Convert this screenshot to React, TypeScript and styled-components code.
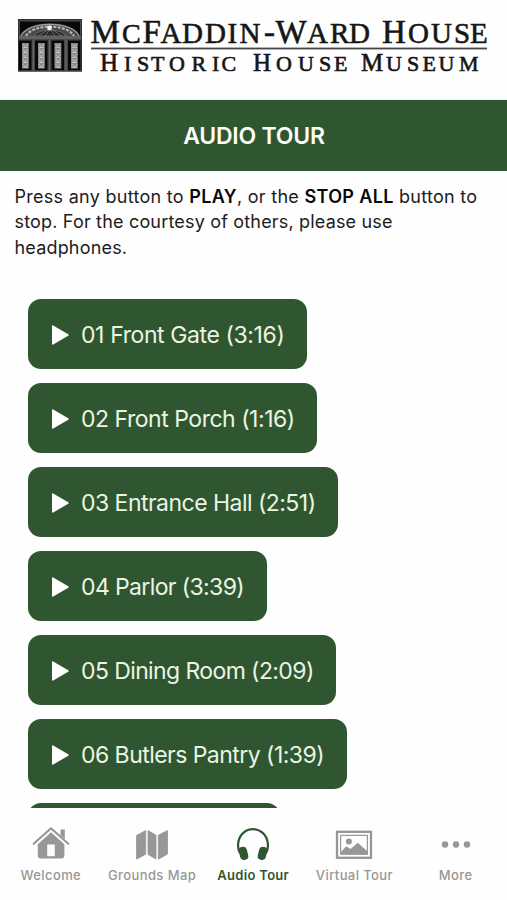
import React from "react";
import styled, { createGlobalStyle } from "styled-components";

const GREEN = "#305631";
const GREY = "#979797";

const GlobalStyle = createGlobalStyle`
  * { box-sizing: border-box; }
  body { margin: 0; background: #fefefe; font-family: Inter, "Liberation Sans", sans-serif; }
`;

const Screen = styled.div`
  width: 507px;
  height: 900px;
  display: flex;
  flex-direction: column;
  overflow: hidden;
  background: #fefefe;
`;

const Header = styled.header`
  height: 100px;
  flex: none;
  border-bottom: 1px solid #eef0e6;
`;

const Logo = styled.svg`
  display: block;
  font-family: "Liberation Serif", serif;
  fill: #161616;
`;

const Title = styled.h1`
  height: 70.5px;
  flex: none;
  margin: 0;
  display: flex;
  align-items: center;
  justify-content: center;
  padding: 1px 0 0 1px;
  background: ${GREEN};
  color: #fbfdf8;
  font-size: 23px;
  font-weight: 600;
  letter-spacing: -0.2px;
`;

const Content = styled.main`
  flex: none;
  height: 637.5px;
  overflow: hidden;
`;

const Intro = styled.p`
  margin: 0;
  height: 128.5px;
  padding: 13px 10px 0 14.5px;
  color: #1c1c1c;
  font-size: 18px;
  line-height: 25.6px;
  letter-spacing: 0.18px;
  white-space: nowrap;
`;

const Strong = styled.b`
  font-weight: 600;
  color: #080808;
  letter-spacing: 0.35px;
`;

const IntroLead = styled.span`
  letter-spacing: 0.28px;
`;

const TrackList = styled.div`
  display: flex;
  flex-direction: column;
  align-items: flex-start;
  gap: 14px;
  padding-left: 28px;
`;

const TrackButton = styled.button<{ $width: number; $spacing: number }>`
  width: ${(p) => p.$width}px;
  height: 70px;
  flex: none;
  display: flex;
  align-items: center;
  gap: 12px;
  padding: 1px 0 0 24px;
  border: 0;
  border-radius: 13px;
  background: ${GREEN};
  color: #eaf5e4;
  font: 400 23px Inter, sans-serif;
  letter-spacing: ${(p) => p.$spacing}px;
  white-space: nowrap;
`;

const PlayIcon = styled.svg`
  width: 17px;
  height: 20px;
  flex: none;
  fill: #fff;
`;

const TabBar = styled.nav`
  height: 92px;
  flex: none;
  display: grid;
  grid-template-columns: repeat(5, 101.2px);
`;

const Tab = styled.a<{ $active?: boolean }>`
  display: flex;
  flex-direction: column;
  align-items: center;
  padding: 16px 0 0 0.5px;
  gap: 3px;
  color: ${(p) => (p.$active ? GREEN : GREY)};
  font-size: 13px;
  font-weight: ${(p) => (p.$active ? 600 : 500)};
  line-height: 16px;
  letter-spacing: ${(p) => (p.$active ? 0.3 : 0.4)}px;
  white-space: nowrap;
`;

const TabIcon = styled.svg`
  width: 40px;
  height: 40px;
  flex: none;
  fill: currentColor;
`;

const tracks = [
  { label: "01 Front Gate (3:16)", width: 279, spacing: -0.4 },
  { label: "02 Front Porch (1:16)", width: 289, spacing: -0.48 },
  { label: "03 Entrance Hall (2:51)", width: 310, spacing: -0.53 },
  { label: "04 Parlor (3:39)", width: 238.5, spacing: -0.62 },
  { label: "05 Dining Room (2:09)", width: 308, spacing: -0.6 },
  { label: "06 Butlers Pantry (1:39)", width: 319, spacing: -0.54 },
  { label: "07 Kitchen (2:20)", width: 252, spacing: -0.5 },
];

const MuseumLogo = () => (
  <Logo width="507" height="99" viewBox="0 0 507 99">
    <rect x="18" y="19" width="64" height="52.5" fill="#484848" />
    <rect x="20" y="21.5" width="60" height="14" fill="#080808" />
    <path d="M20 36 C27 19 73 19 80 36Z" fill="#4a4a4a" />
    <path d="M21 36 C28 20.5 72 20.5 79 36" fill="none" stroke="#a2a2a2" strokeWidth="1.2" />
    <path d="M26 36 C33 23.5 67 23.5 74 36" fill="none" stroke="#b5b5b5" strokeWidth="2.2" strokeDasharray="3 1.3" />
    <path d="M34 36 C39 28 61 28 66 36Z" fill="#292929" stroke="#777" strokeWidth=".8" />
    <path d="M49 29 L38 36 M50 29 L45 36 M50 29 L55 36 M51 29 L62 36" stroke="#858585" strokeWidth=".7" />
    <circle cx="49.5" cy="28" r="2.4" fill="#f4f4f4" />
    <rect x="18" y="36" width="64" height="3" fill="#626262" />
    <rect x="18.5" y="19.5" width="63" height="51.5" fill="none" stroke="#303030" />
    {[19, 35, 51.5, 68].map((x) => (
      <g key={x}>
        <rect x={x} y="40.5" width="12.5" height="29.5" fill="#070707" />
        <rect x={x + 3} y="43" width="6.8" height="25.5" fill="#8b8b8b" />
        {[44, 49, 54, 59, 64].map((y) => (
          <path
            key={y}
            d={`M${x + 4} ${y} l2.4 3 2.4 -3 M${x + 4} ${y + 3.5} h5`}
            fill="none"
            stroke={y % 2 ? "#c8c8c8" : "#bdbdbd"}
            strokeWidth=".9"
          />
        ))}
      </g>
    ))}
    {[33.2, 49.5, 66].map((x) => (
      <path key={x} d={`M${x} 39.5V71`} stroke="#696969" strokeWidth="1" />
    ))}
    <g stroke="#161616" strokeWidth=".6">
      <text y="43" fontSize="33">
        <tspan x="90.5">M</tspan>
        <tspan x="122" fontSize="28">C</tspan>
        <tspan x="142.5">F</tspan>
        <tspan x="160.5 182 205 227.5 239.5" fontSize="29">ADDIN</tspan>
        <tspan x="264">-</tspan>
        <tspan x="275.5">W</tspan>
        <tspan x="307 330 349" fontSize="29">ARD</tspan>
        <tspan x="382">H</tspan>
        <tspan x="408 431 454 470" fontSize="29">OUSE</tspan>
      </text>
      <text y="71" fontSize="25">
        <tspan x="100">H</tspan>
        <tspan x="124 137 151 169 191.5 212 221.5" fontSize="22">ISTORIC</tspan>
        <tspan x="253">H</tspan>
        <tspan x="276 298 319 334" fontSize="22">OUSE</tspan>
        <tspan x="361">M</tspan>
        <tspan x="386 407 422.5 438.5 459" fontSize="22">USEUM</tspan>
      </text>
    </g>
    <rect x="91" y="47.6" width="396" height="1.8" fill="#444" />
  </Logo>
);

const HomeIcon = () => (
  <TabIcon viewBox="0 0 40 40">
    <path d="M2.7 19.8 L20 4.3 L37.3 19.8" fill="none" stroke="currentColor" strokeWidth="2.2" strokeLinecap="round" strokeLinejoin="round" />
    <path d="M29.5 5.6h4.3v9.5l-4.3-3.8z" />
    <path fillRule="evenodd" d="M20 8.2 33.4 20.2V31.5a3 3 0 0 1-3 3H9.8a3 3 0 0 1-3-3V20.2ZM16.2 20.5V32.3H23.8V20.5Z" />
  </TabIcon>
);

const MapIcon = () => (
  <TabIcon viewBox="0 0 40 40" strokeLinejoin="round">
    <path d="M4.5 11.6 13.7 6.5V30.2L4.5 35.2ZM16 6.6 24 11.2V35L16 30.4ZM26.3 11.2 35.5 6.5V30.1L26.3 35.2Z" stroke="currentColor" strokeWidth=".8" />
  </TabIcon>
);

const HeadphonesIcon = () => (
  <TabIcon viewBox="0 0 40 40">
    <path d="M7.1 29.5C5 26 4.7 22.5 5.3 18.5 6.5 10.5 12.5 5.2 20 5.2S33.5 10.5 34.7 18.5C35.3 22.5 35 26 32.9 29.5" fill="none" stroke="currentColor" strokeWidth="2.2" />
    <rect x="6.4" y="22.8" width="8.2" height="13.2" rx="3.7" transform="rotate(-14 10.6 29.3)" />
    <rect x="25.4" y="22.8" width="8.2" height="13.2" rx="3.7" transform="rotate(14 29.4 29.3)" />
  </TabIcon>
);

const PictureIcon = () => (
  <TabIcon viewBox="0 0 40 40">
    <rect x="3" y="7.8" width="34" height="26" fill="none" stroke="currentColor" strokeWidth="2.3" />
    <rect x="6.6" y="11.4" width="26.8" height="18.8" fill="none" stroke="currentColor" strokeWidth="1.2" />
    <circle cx="14.9" cy="17.6" r="3" />
    <path d="M7 28 12.2 22.2 16.6 25 23.8 18.8 33.2 27.2V30.5H7Z" />
  </TabIcon>
);

const MoreIcon = () => (
  <TabIcon viewBox="0 0 40 40">
    <circle cx="9" cy="20.5" r="3.2" />
    <circle cx="20" cy="20.5" r="3.2" />
    <circle cx="31" cy="20.5" r="3.2" />
  </TabIcon>
);

const tabs = [
  { label: "Welcome", Icon: HomeIcon },
  { label: "Grounds Map", Icon: MapIcon },
  { label: "Audio Tour", Icon: HeadphonesIcon, active: true },
  { label: "Virtual Tour", Icon: PictureIcon },
  { label: "More", Icon: MoreIcon },
];

export default function App() {
  return (
    <>
      <GlobalStyle />
      <Screen>
        <Header>
          <MuseumLogo />
        </Header>
        <Title>AUDIO TOUR</Title>
        <Content>
          <Intro>
            <IntroLead>
              Press any button to <Strong>PLAY</Strong>, or the <Strong>STOP ALL</Strong> button to
            </IntroLead>
            <br />
            stop. For the courtesy of others, please use
            <br />
            headphones.
          </Intro>
          <TrackList>
            {tracks.map((t) => (
              <TrackButton key={t.label} $width={t.width} $spacing={t.spacing}>
                <PlayIcon viewBox="0 0 17 20">
                  <path d="M0 1.2Q0 0 1.2 .5L16.2 9.2Q17.3 10 16.2 10.8L1.2 19.5Q0 20 0 18.8Z" />
                </PlayIcon>
                {t.label}
              </TrackButton>
            ))}
          </TrackList>
        </Content>
        <TabBar>
          {tabs.map(({ label, Icon, active }) => (
            <Tab key={label} $active={active}>
              <Icon />
              {label}
            </Tab>
          ))}
        </TabBar>
      </Screen>
    </>
  );
}
